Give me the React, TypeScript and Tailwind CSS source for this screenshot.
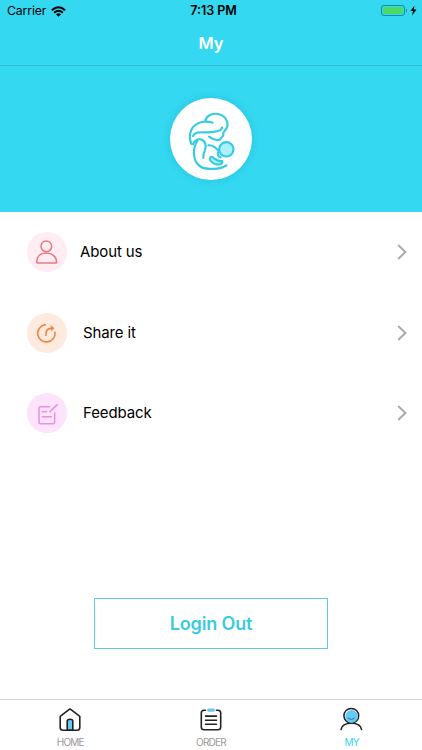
import type { ReactNode } from "react";

const rows = [
  { label: "About us", icon: <PersonIcon />, tint: "bg-[#ffedf3]", gap: "ml-[13px]" },
  { label: "Share it", icon: <ShareIcon />, tint: "bg-[#ffeadf]", gap: "ml-4" },
  { label: "Feedback", icon: <NoteIcon />, tint: "bg-[#fde3fb]", gap: "ml-4" }
];

const tabs = [
  { label: "HOME", icon: <HomeIcon />, color: "text-[#999]" },
  { label: "ORDER", icon: <OrderIcon />, color: "text-[#999]" },
  { label: "MY", icon: <MyIcon />, color: "text-[#35d3ea]" }
];

function PersonIcon() {
  return (
    <svg width="40" height="40" viewBox="0 0 120 120" fill="none" stroke="#e97b80" strokeWidth="4.5" strokeLinejoin="round">
      <circle cx="58" cy="43" r="16" />
      <path d="M29 92C29 74 40 63 58 63S89 74 89 92Q89 93 87 93H31Q29 93 29 92Z" />
    </svg>
  );
}

function ShareIcon() {
  return (
    <svg width="40" height="40" viewBox="0 0 120 120" fill="none" stroke="#ed8643" strokeWidth="5" strokeLinecap="round" strokeLinejoin="round">
      <path d="M55 35A26 26 0 1 0 84 58" />
      <path d="M57 67C55 55 61 46 72 46H78" />
      <path d="M73 39L81 46L74 53Z" fill="#ed8643" strokeWidth="2" />
    </svg>
  );
}

function NoteIcon() {
  return (
    <svg width="40" height="40" viewBox="0 0 120 120" fill="none" stroke="#ea91de" strokeWidth="4.5" strokeLinecap="round" strokeLinejoin="round">
      <path d="M68 41H40Q36 41 36 45V88Q36 92 40 92H79Q83 92 83 88V60" />
      <path d="M69 56L91 35M46 56H59M46 71H73" />
    </svg>
  );
}

function HomeIcon() {
  return (
    <svg width="24" height="26" viewBox="0 0 24 26" fill="none" stroke="#222" strokeWidth="1.6" strokeLinejoin="round">
      <path d="M2.2 9.4L11.6 2.2Q12 1.9 12.4 2.2L21.8 9.4V20.5Q21.8 23.3 19 23.3H5Q2.2 23.3 2.2 20.5Z" />
      <path d="M9.2 23V14.2Q9.2 12.2 12 12.2T14.8 14.2V23Z" fill="#65c9f5" />
    </svg>
  );
}

function OrderIcon() {
  return (
    <svg width="24" height="26" viewBox="0 0 24 26" fill="none" stroke="#222" strokeWidth="1.6" strokeLinecap="round">
      <path d="M6.5 3.2H5Q2.3 3.2 2.3 5.9V20Q2.3 22.7 5 22.7H19Q21.7 22.7 21.7 20V5.9Q21.7 3.2 19 3.2H17.5" />
      <rect x="8.3" y="1.6" width="7.4" height="3.2" rx="1.2" fill="#65c9f5" stroke="none" />
      <path d="M6.5 9.1H17.5M6.5 13.2H17.5M6.5 17.3H17.5" />
    </svg>
  );
}

function MyIcon() {
  return (
    <svg width="24" height="26" viewBox="0 0 24 26" fill="none" stroke="#222" strokeWidth="1.5" strokeLinecap="round">
      <path d="M1 22.5C1.6 19 5.2 16.2 11.3 16.2S21 19 21.6 22.5" />
      <circle cx="11.3" cy="8.8" r="7.4" fill="#fff" />
      <circle cx="11.6" cy="9.4" r="6.3" fill="#65c9f5" stroke="none" />
      <path d="M8.3 11.4Q11.3 13.8 14.3 11.4" strokeWidth="1" stroke="#26779c" />
    </svg>
  );
}

function MotherLogo() {
  return (
    <svg width="82" height="82" viewBox="15 17 246 246" fill="none" stroke="#35cce1" strokeWidth="6.5" strokeLinecap="round" strokeLinejoin="round">
      <path d="M79 155C68 127 78 96 111 89Q128 86 143 91" />
      <path d="M121 84C126 68 145 61 162 66C184 72 193 94 184 109C180 116 172 119 175 127C177 133 169 132 168 138C163 146 149 145 132 133" />
      <path d="M84 131C92 115 110 121 130 120C152 119 170 116 171 106" />
      <path d="M84 156C88 145 98 140 107 141C121 144 126 161 119 176Q114 185 115 197" />
      <path d="M97 146C83 166 82 205 104 221C123 235 168 231 184 219" />
      <path d="M130 159C143 157 151 164 162 177" />
      <path d="M172 206C174 214 164 218 155 216C145 214 135 207 135 199C136 191 143 192 147 198C154 204 163 207 172 206Z" fill="#adf0fb" />
      <circle cx="184" cy="171" r="21.5" fill="#adf0fb" />
      <path d="M159 181Q156 191 167 195" />
    </svg>
  );
}

function StatusBar() {
  return (
    <div className="grid h-[22px] grid-cols-3 items-center px-[7px] text-black">
      <div className="flex items-center gap-[5px] text-[12.3px] tracking-[-0.15px]">
        <span>Carrier</span>
        <svg width="15" height="11" viewBox="0 0 15 11" fill="none" stroke="currentColor" strokeWidth="2">
          <path d="M.8 4.2Q7.5-1.8 14.2 4.2M3.1 6.7Q7.5 2.8 11.9 6.7" />
          <path d="M5 8.2Q7.5 6.3 10 8.2L7.5 10.8Z" fill="currentColor" stroke="none" />
        </svg>
      </div>
      <span className="pl-[5px] text-center text-[12.5px] font-semibold whitespace-nowrap">7:13 PM</span>
      <svg className="-mr-[3px] justify-self-end" width="38" height="13" viewBox="0 0 38 13">
        <rect x="1.5" y=".5" width="23" height="10" rx="2.5" fill="none" stroke="#168ba2" />
        <rect x="3" y="2" width="20" height="7" rx="1" fill="#4cd964" />
        <path d="M26 3.5Q28 5.5 26 7.5Z" fill="#168ba2" />
        <path d="M34.5 .5L30.5 6H33L32 10.5L36.5 4.5H33.8Z" fill="#000" />
      </svg>
    </div>
  );
}

function Row({ label, icon, tint, gap }: { label: string; icon: ReactNode; tint: string; gap: string }) {
  return (
    <div className="flex h-[80.5px] items-center pr-[15px] pl-[27px]">
      <div className={`size-10 shrink-0 rounded-full ${tint}`}>{icon}</div>
      <span className={`text-[15px] tracking-[-0.12px] text-black ${gap}`}>{label}</span>
      <svg className="ml-auto" width="10" height="16" viewBox="0 0 10 16" fill="none" stroke="#aaa" strokeWidth="2">
        <path d="M1.2 1L8.4 8L1.2 15" />
      </svg>
    </div>
  );
}

export default function App() {
  return (
    <div className="flex h-[750px] w-[422px] flex-col overflow-hidden bg-white font-['Inter','Liberation_Sans',sans-serif]">
      <header className="flex h-[212px] shrink-0 flex-col bg-[#34d8f1]">
        <StatusBar />
        <div className="flex h-11 items-center justify-center border-b border-[#2bbdd4]">
          <h1 className="text-[16.5px] font-semibold text-white">My</h1>
        </div>
        <div className="flex flex-1 justify-center pt-8">
          <div className="size-[82px] rounded-full bg-white shadow-[0_0_8px_rgba(0,120,150,0.22)]">
            <MotherLogo />
          </div>
        </div>
      </header>
      <main className="flex flex-1 flex-col">
        {rows.map((row) => (
          <Row key={row.label} {...row} />
        ))}
        <button className="mx-auto mt-auto mb-[50px] h-[51px] w-[234px] border border-[#5bcddd] text-[18px] font-semibold tracking-[-0.15px] text-[#3bcbe1]">
          Login Out
        </button>
      </main>
      <nav className="grid h-[51px] shrink-0 grid-cols-3 border-t border-[#d5d5d5] bg-white">
        {tabs.map((tab) => (
          <div key={tab.label} className={`flex flex-col items-center pt-[7px] ${tab.color}`}>
            {tab.icon}
            <span className="mt-[3px] text-[10px] leading-3 tracking-[-0.8px]">{tab.label}</span>
          </div>
        ))}
      </nav>
    </div>
  );
}
